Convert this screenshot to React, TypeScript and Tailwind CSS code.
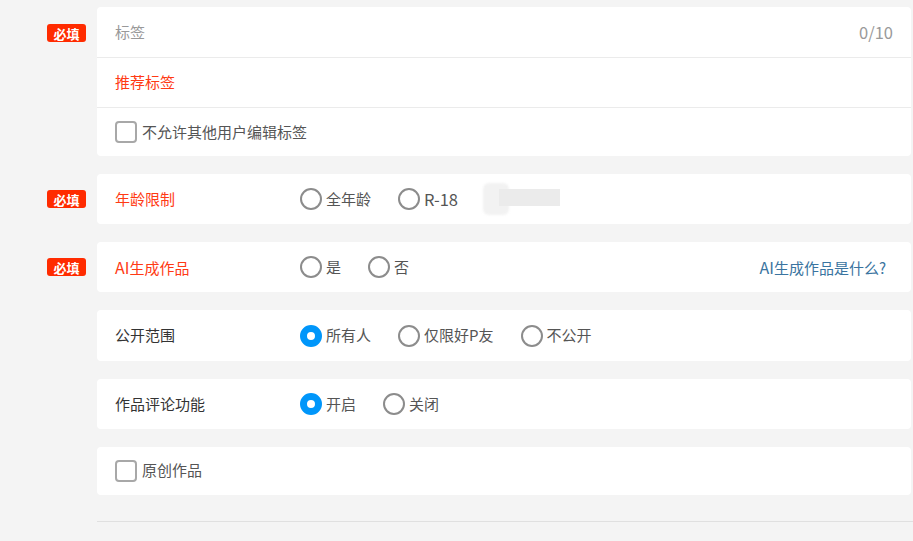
import React from "react";

const font = { fontFamily: '"Noto Sans CJK SC", "Noto Sans", sans-serif' };

function Badge() {
  return (
    <span className="inline-flex h-[18px] w-[39px] items-center justify-center rounded-[3px] bg-[#ff2b00] text-[13px] font-bold leading-none text-white">
      必填
    </span>
  );
}

function Radio({ label, checked, last }: { label: React.ReactNode; checked?: boolean; last?: boolean }) {
  return (
    <div className={`flex items-center ${last ? "" : "mr-[27px]"}`}>
      {checked ? (
        <span className="box-border h-[22px] w-[22px] rounded-full border-[7px] border-[#0096fa] bg-white" />
      ) : (
        <span className="box-border h-[22px] w-[22px] rounded-full border-2 border-[#8c8c8c] bg-white" />
      )}
      <span className="ml-[4px] text-[15px] text-[#555]">{label}</span>
    </div>
  );
}

function Checkbox({ label }: { label: string }) {
  return (
    <div className="flex items-center">
      <span className="box-border h-[22px] w-[22px] rounded-[4px] border-2 border-[#a8a8a8] bg-white" />
      <span className="ml-[5px] text-[15px] text-[#555]">{label}</span>
    </div>
  );
}

function Row({
  required,
  children,
  badgeTop,
}: {
  required?: boolean;
  children: React.ReactNode;
  badgeTop?: boolean;
}) {
  return (
    <div className="flex">
      <div className={`flex w-[97px] shrink-0 justify-end pr-[11px] ${badgeTop ? "items-start pt-[17px]" : "items-center"}`}>
        {required && <Badge />}
      </div>
      <div className="mr-[2px] flex-1 rounded-[4px] bg-white">{children}</div>
    </div>
  );
}

export default function App() {
  return (
    <div className="min-h-[541px] w-[913px] bg-[#f4f4f4] pt-[7px]" style={font}>
      <div className="flex flex-col gap-[18px]">
        <Row required badgeTop>
          <div className="flex h-[51px] items-center justify-between border-b border-[#ebebeb] pl-[18px] pr-[18px]">
            <span className="text-[15px] text-[#999]">标签</span>
            <span className="text-[16.5px] text-[#999]">0/10</span>
          </div>
          <div className="flex h-[50px] items-center border-b border-[#ebebeb] pl-[18px]">
            <span className="text-[15px] text-[#ff3a14]">推荐标签</span>
          </div>
          <div className="flex h-[48px] items-center pl-[18px]">
            <Checkbox label="不允许其他用户编辑标签" />
          </div>
        </Row>

        <Row required>
          <div className="flex h-[50px] items-center pl-[18px]">
            <span className="w-[185px] text-[15px] text-[#ff3a14]">年龄限制</span>
            <Radio label="全年龄" />
            <Radio label={<span className="text-[16.5px]">R-18</span>} last />
            <div className="relative ml-[25px] h-[32px] w-[77px]">
              <div className="absolute left-0 top-0 h-[32px] w-[26px] rounded-[6px] bg-[#f2f2f2] blur-[1px]" />
              <div className="absolute left-[16px] top-[6px] h-[17px] w-[61px] bg-[#ebebeb] blur-[0.6px]" />
            </div>
          </div>
        </Row>

        <Row required>
          <div className="flex h-[50px] items-center pl-[18px] pr-[25px]">
            <span className="w-[185px] text-[15px] text-[#ff3a14]">
              <span className="text-[16px]">AI</span>生成作品
            </span>
            <Radio label="是" />
            <Radio label="否" last />
            <span className="ml-auto text-[15px] text-[#3a74a0]">
              <span className="text-[16px]">AI</span>生成作品是什么?
            </span>
          </div>
        </Row>

        <Row>
          <div className="flex h-[51px] items-center pl-[18px]">
            <span className="w-[185px] text-[15px] text-[#333]">公开范围</span>
            <Radio label="所有人" checked />
            <Radio label="仅限好P友" />
            <Radio label="不公开" last />
          </div>
        </Row>

        <Row>
          <div className="flex h-[50px] items-center pl-[18px]">
            <span className="w-[185px] text-[15px] text-[#333]">作品评论功能</span>
            <Radio label="开启" checked />
            <Radio label="关闭" last />
          </div>
        </Row>

        <Row>
          <div className="-mt-[1px] flex h-[49px] items-center pl-[18px]">
            <Checkbox label="原创作品" />
          </div>
        </Row>
      </div>
      <div className="ml-[97px] mt-[26px] h-px bg-[#e0e0e0]" />
    </div>
  );
}
